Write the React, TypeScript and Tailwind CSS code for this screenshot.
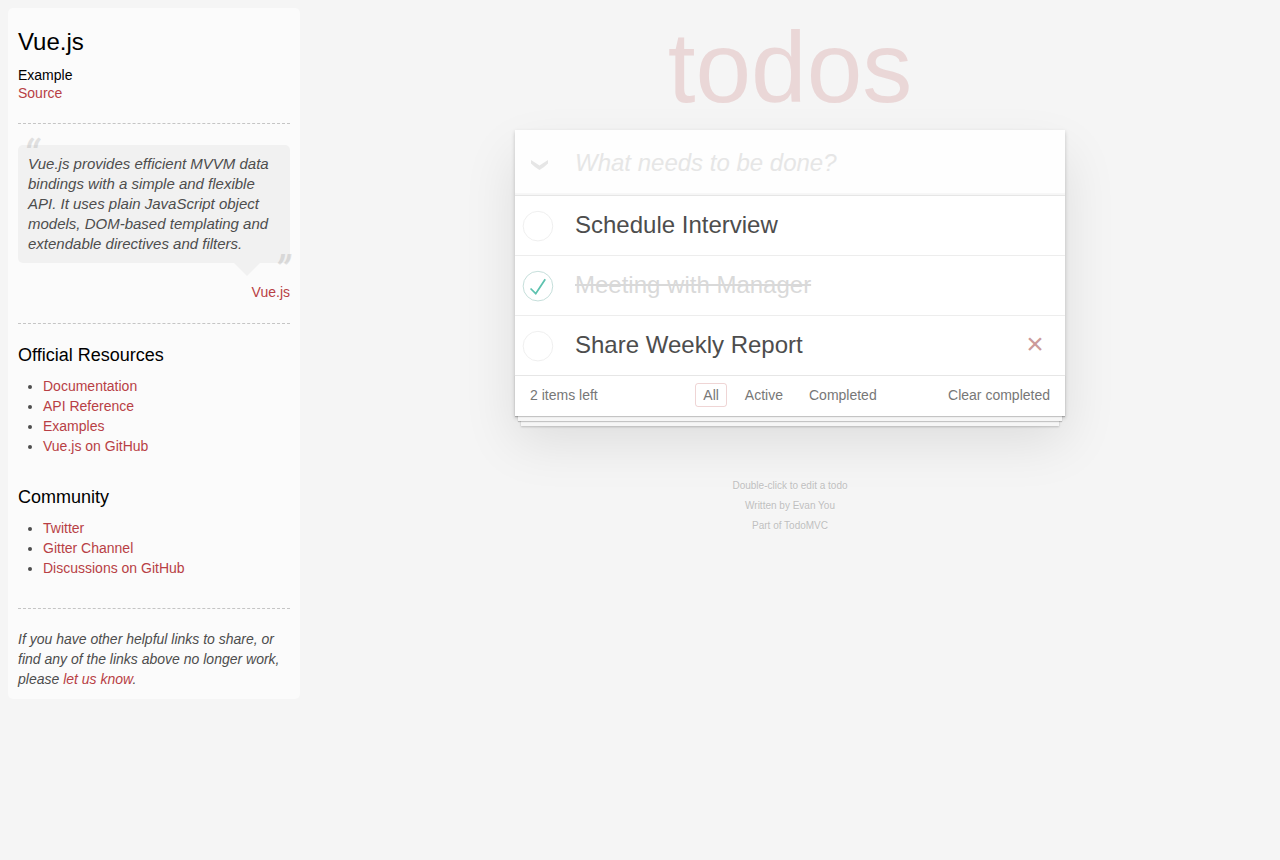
import { useState } from 'react';

type Todo = { id: number; title: string; done: boolean; removable?: boolean };
type Filter = 'All' | 'Active' | 'Completed';

const initialTodos: Todo[] = [
  { id: 1, title: 'Schedule Interview', done: false },
  { id: 2, title: 'Meeting with Manager', done: true },
  { id: 3, title: 'Share Weekly Report', done: false, removable: true },
];

const filters: Filter[] = ['All', 'Active', 'Completed'];

function Divider() {
  return <hr className="my-5 border-0 border-t border-dashed border-[#c5c5c5]" />;
}

function SideLink({ children }: { children: string }) {
  return (
    <a href="#" className="text-[#b83f45] hover:text-[#787e7e] hover:underline">
      {children}
    </a>
  );
}

function LinkList({ title, links }: { title: string; links: string[] }) {
  return (
    <section className="mb-[30px]">
      <h4 className="mb-2.5 text-lg leading-[22px] text-black">{title}</h4>
      <ul className="ml-[25px] list-disc">
        {links.map((link) => (
          <li key={link} className="leading-5">
            <SideLink>{link}</SideLink>
          </li>
        ))}
      </ul>
    </section>
  );
}

function Sidebar() {
  return (
    <aside className="mt-2 ml-2 w-[292px] shrink-0 self-start rounded-[5px] bg-[#fbfbfb] p-2.5 text-sm">
      <header>
        <h3 className="mt-2.5 mb-3 text-2xl leading-[27px] text-black">Vue.js</h3>
        <h5 className="leading-[17px] text-black">Example</h5>
        <div className="leading-[19px]">
          <SideLink>Source</SideLink>
        </div>
      </header>
      <Divider />
      <figure className="mt-[21px]">
        <blockquote className="relative rounded-[5px] bg-[#f1f1f1] px-2.5 py-[9px] text-[15px] leading-5 italic">
          <span aria-hidden="true" className="absolute -top-[14px] left-[5px] font-[Roboto,sans-serif] text-[44px] leading-[50px] opacity-15">“</span>
          <p>
            Vue.js provides efficient MVVM data bindings with a simple and flexible API. It uses plain
            JavaScript object models, DOM-based templating and extendable directives and filters.
          </p>
          <span aria-hidden="true" className="absolute right-0 -bottom-[34px] font-[Roboto,sans-serif] text-[44px] leading-[50px] opacity-15">”</span>
          <span aria-hidden="true" className="absolute top-full right-[30px] border-x-[13px] border-t-[13px] border-x-transparent border-t-[#f1f1f1]" />
        </blockquote>
        <figcaption className="mt-5 pb-0.5 text-right leading-[18px]">
          <SideLink>Vue.js</SideLink>
        </figcaption>
      </figure>
      <Divider />
      <LinkList title="Official Resources" links={['Documentation', 'API Reference', 'Examples', 'Vue.js on GitHub']} />
      <LinkList title="Community" links={['Twitter', 'Gitter Channel', 'Discussions on GitHub']} />
      <Divider />
      <footer className="leading-5 italic">
        If you have other helpful links to share, or find any of the links above no longer work, please{' '}
        <SideLink>let us know</SideLink>.
      </footer>
    </aside>
  );
}

function ToggleMark({ done }: { done: boolean }) {
  return (
    <svg viewBox="-10 -18 100 135" className="pointer-events-none size-10 overflow-visible [grid-area:1/1]" aria-hidden="true">
      <circle cx="50" cy="50" r="50" fill="none" stroke={done ? '#bddad5' : '#ededed'} strokeWidth="3" />
      {done && <path fill="#5dc2af" d="M72 25L42 71 27 56l-4 4 20 20 34-52z" />}
    </svg>
  );
}

export default function App() {
  const [todos, setTodos] = useState(initialTodos);
  const [filter, setFilter] = useState<Filter>('All');
  const [draft, setDraft] = useState('');

  const left = todos.filter((t) => !t.done).length;
  const visible = todos.filter((t) => filter === 'All' || (filter === 'Completed') === t.done);

  const toggle = (id: number) => setTodos(todos.map((t) => (t.id === id ? { ...t, done: !t.done } : t)));
  const addTodo = () => {
    if (!draft.trim()) return;
    setTodos([...todos, { id: Date.now(), title: draft.trim(), done: false }]);
    setDraft('');
  };

  return (
    <div className="flex min-h-screen bg-[#f5f5f5] font-['Liberation_Sans',Arial,sans-serif] text-sm text-[#4d4d4d]">
      <Sidebar />
      <main className="mx-auto max-w-[550px] min-w-[230px] flex-1">
        <h1 className="pt-1 text-center text-[100px] leading-[126px] text-[#af2f2f]/15">todos</h1>
        <section className="bg-white shadow-[0_2px_4px_0_rgba(0,0,0,0.2),0_25px_50px_0_rgba(0,0,0,0.1)]">
          <form
            className="flex h-[65px] items-center bg-[#fefefe] shadow-[inset_0_-2px_1px_rgba(0,0,0,0.03)]"
            onSubmit={(e) => {
              e.preventDefault();
              addTodo();
            }}
          >
            <div className="grid h-10 w-[60px] items-center pl-4">
              <input
                type="checkbox"
                aria-label="Mark all as complete"
                className="size-5 appearance-none [grid-area:1/1]"
                checked={left === 0}
                onChange={() => setTodos(todos.map((t) => ({ ...t, done: left > 0 })))}
              />
              <svg viewBox="0 0 17 10" className="pointer-events-none mt-1 h-2.5 w-[17px] [grid-area:1/1]" aria-hidden="true">
                <path d="M0 0L8.500 5.500L17 0V3.500Q13 7.500 8.500 10Q4 7.500 0 3.500Z" fill={left === 0 ? '#737373' : '#e6e6e6'} />
              </svg>
            </div>
            <input
              type="text"
              aria-label="New todo"
              placeholder="What needs to be done?"
              className="h-full min-w-0 flex-1 bg-transparent pr-4 text-2xl outline-none placeholder:text-[#e6e6e6] placeholder:italic"
              value={draft}
              onChange={(e) => setDraft(e.target.value)}
            />
          </form>
          <ul className="divide-y divide-[#ededed] border-t border-[#e6e6e6]">
            {visible.map((todo) => (
              <li key={todo.id} className="flex items-center">
                <div className="grid w-[60px] shrink-0">
                  <input
                    id={`todo-${todo.id}`}
                    type="checkbox"
                    className="size-10 appearance-none [grid-area:1/1]"
                    checked={todo.done}
                    onChange={() => toggle(todo.id)}
                  />
                  <ToggleMark done={todo.done} />
                </div>
                <label
                  htmlFor={`todo-${todo.id}`}
                  className={`flex-1 pt-3.5 pb-4 text-2xl leading-[29px] ${todo.done ? 'text-[#d9d9d9] line-through' : ''}`}
                >
                  {todo.title}
                </label>
                {todo.removable && (
                  <button
                    type="button"
                    aria-label={`Delete ${todo.title}`}
                    className="mr-2.5 mb-1 h-10 w-10 text-[30px] leading-9 text-[#cc9a9a] hover:text-[#af5b5e]"
                    onClick={() => setTodos(todos.filter((t) => t.id !== todo.id))}
                  >
                    ×
                  </button>
                )}
              </li>
            ))}
          </ul>
          <footer className="grid grid-cols-[1fr_auto_1fr] items-center border-t border-[#e6e6e6] px-[15px] pt-[7px] pb-[9px] text-[#777777] shadow-[0_1px_1px_rgba(0,0,0,0.2),0_8px_0_-3px_#f6f6f6,0_9px_1px_-3px_rgba(0,0,0,0.2),0_16px_0_-6px_#f6f6f6,0_17px_2px_-6px_rgba(0,0,0,0.2)]">
            <span>{left} items left</span>
            <nav className="flex gap-2.5">
              {filters.map((name) => (
                <a
                  key={name}
                  href="#"
                  className={`rounded-[3px] border px-[7px] py-[3px] leading-4 ${filter === name ? 'border-[#af2f2f]/20' : 'border-transparent'}`}
                  onClick={(e) => {
                    e.preventDefault();
                    setFilter(name);
                  }}
                >
                  {name}
                </a>
              ))}
            </nav>
            <button
              type="button"
              className="justify-self-end hover:underline"
              onClick={() => setTodos(todos.filter((t) => !t.done))}
            >
              Clear completed
            </button>
          </footer>
        </section>
        <footer className="mt-[60px] text-center text-[10px] leading-5 text-[#bfbfbf] [text-shadow:0_1px_0_rgba(255,255,255,0.5)]">
          <p>Double-click to edit a todo</p>
          <p>
            Written by <a href="#" className="hover:underline">Evan You</a>
          </p>
          <p>
            Part of <a href="#" className="hover:underline">TodoMVC</a>
          </p>
        </footer>
      </main>
    </div>
  );
}
